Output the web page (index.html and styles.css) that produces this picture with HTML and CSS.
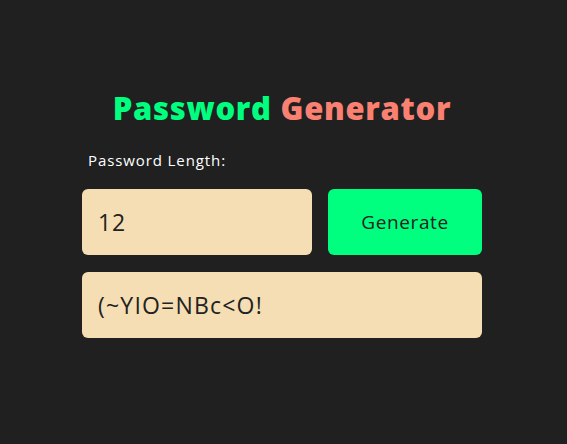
FILE: index.html
```html
<!DOCTYPE html>
<html>
<head>
<meta charset="utf-8">
<link rel="stylesheet" href="styles.css">
</head>
<body>
<main class="app">
  <h1 class="title"><span class="t-green">Password</span> <span class="t-salmon">Generator</span></h1>
  <label class="label" for="len">Password Length:</label>
  <div class="row">
    <input id="len" class="box len" type="text" value="12">
    <button class="btn">Generate</button>
  </div>
  <div class="box output">(~YIO=NBc&lt;O!</div>
</main>
</body>
</html>
```
FILE: styles.css
```css
* { box-sizing: border-box; }
html, body { margin: 0; height: 100%; }
body {
  background: #202020;
  font-family: "Open Sans", "DejaVu Sans", sans-serif;
  display: flex;
  justify-content: center;
}
.app {
  width: 400px;
  margin-left: -3px;
  padding-top: 86px;
  display: flex;
  flex-direction: column;
}
.title {
  margin: 0;
  text-align: center;
  font-size: 31px;
  font-weight: 800;
  line-height: 44px;
  letter-spacing: 0.7px;
}
.t-green { color: #00ff7f; }
.t-salmon { color: #fa8072; }
.label {
  color: #fff;
  font-size: 15px;
  line-height: 20px;
  letter-spacing: 0.9px;
  margin: 20px 0 0 6px;
}
.row {
  display: flex;
  gap: 16px;
  margin-top: 19px;
}
.box {
  background: #f5deb3;
  border: none;
  border-radius: 6px;
  height: 66px;
  color: #222;
  font-family: inherit;
  font-size: 23px;
  letter-spacing: 0.8px;
  padding: 0 16px;
  outline: none;
}
.len { width: 230px; }
.btn {
  flex: 1;
  height: 66px;
  border: none;
  border-radius: 6px;
  background: #00ff7f;
  color: #222;
  font-family: inherit;
  font-size: 19px;
  letter-spacing: 0.6px;
}
.output {
  margin-top: 17px;
  display: flex;
  align-items: center;
  letter-spacing: 1.2px;
}
```
